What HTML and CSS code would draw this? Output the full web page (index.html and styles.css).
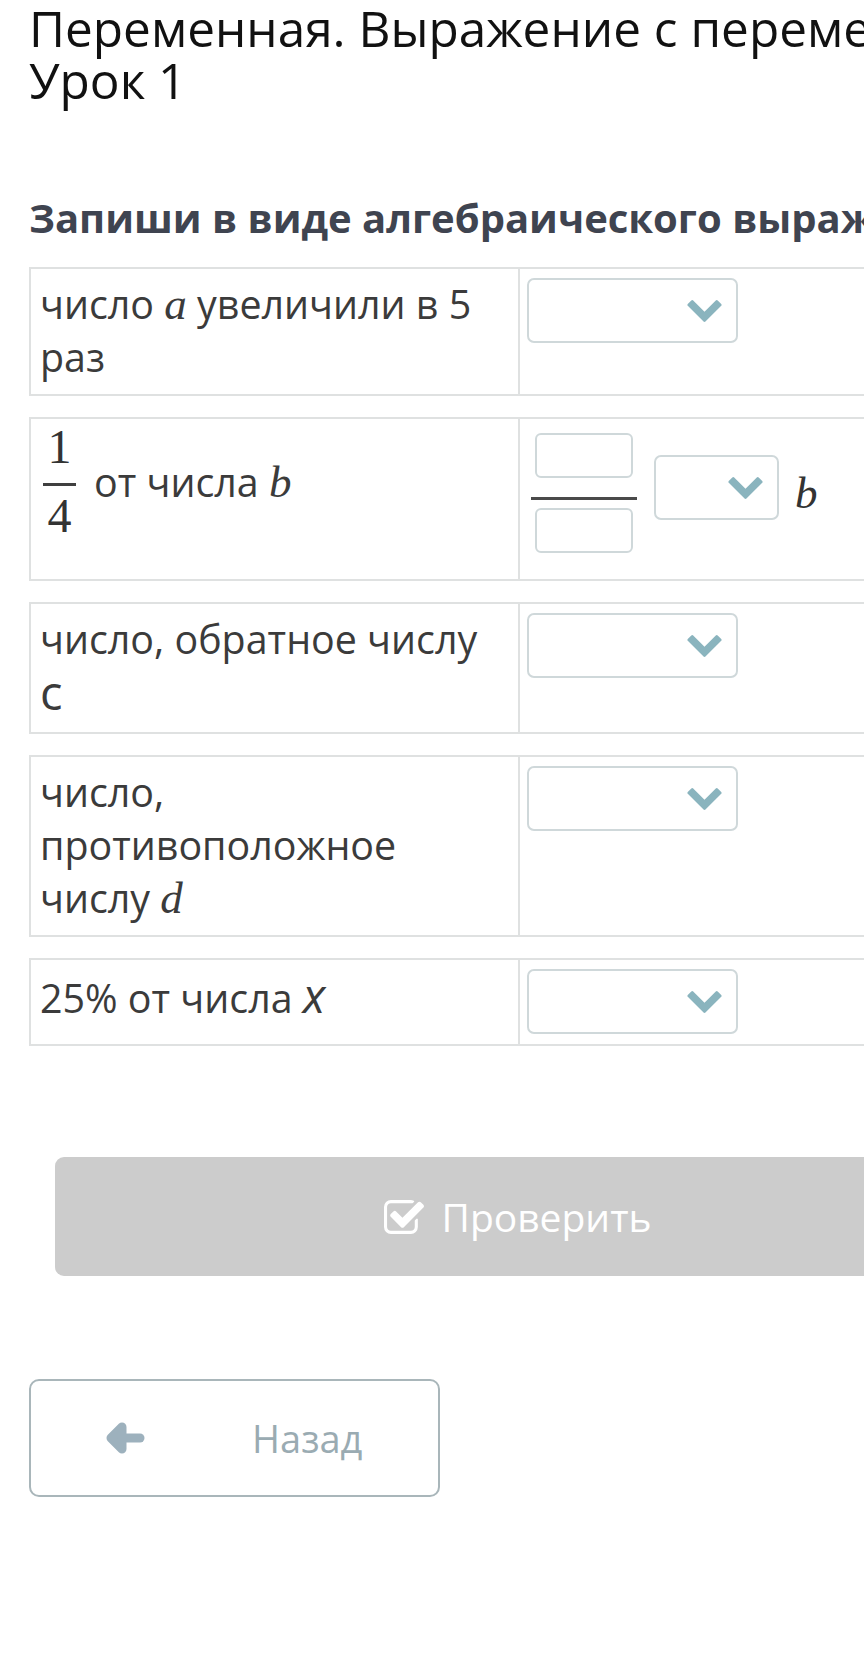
FILE: index.html
```html
<!DOCTYPE html>
<html lang="ru">
<head>
<meta charset="utf-8">
<title>Переменная. Выражение с переменной. Урок 1</title>
<link rel="stylesheet" href="styles.css">
</head>
<body>
<div class="page">
  <h1 class="title">Переменная. Выражение с переменной. Урок 1</h1>
  <h2 class="task-heading">Запиши в виде алгебраического выражения:</h2>

  <div class="rows">
    <div class="row">
      <div class="cell">число <span class="mi">a</span> увеличили в 5 раз</div>
      <div class="cell-answer">
        <div class="select"><svg class="chev" viewBox="90 533 1612 1035"><path d="M1683 808l-742 741q-19 19-45 19t-45-19l-742-741q-19-19-19-45.5t19-45.5l166-165q19-19 45-19t45 19l531 531 531-531q19-19 45-19t45 19l166 165q19 19 19 45.5t-19 45.5z"/></svg></div>
      </div>
    </div>

    <div class="row">
      <div class="cell cell-frac">
        <div class="frac">
          <span class="frac-num">1</span>
          <span class="frac-bar"></span>
          <span class="frac-den">4</span>
        </div>
        <span class="frac-text">от числа <span class="mi">b</span></span>
      </div>
      <div class="cell-answer cell-answer--expr">
        <div class="frac-input">
          <span class="input-box"></span>
          <span class="input-bar"></span>
          <span class="input-box"></span>
        </div>
        <div class="select select--small"><svg class="chev" viewBox="90 533 1612 1035"><path d="M1683 808l-742 741q-19 19-45 19t-45-19l-742-741q-19-19-19-45.5t19-45.5l166-165q19-19 45-19t45 19l531 531 531-531q19-19 45-19t45 19l166 165q19 19 19 45.5t-19 45.5z"/></svg></div>
        <span class="mi expr-var">b</span>
      </div>
    </div>

    <div class="row">
      <div class="cell">число, обратное числу <span class="mv">c</span></div>
      <div class="cell-answer">
        <div class="select"><svg class="chev" viewBox="90 533 1612 1035"><path d="M1683 808l-742 741q-19 19-45 19t-45-19l-742-741q-19-19-19-45.5t19-45.5l166-165q19-19 45-19t45 19l531 531 531-531q19-19 45-19t45 19l166 165q19 19 19 45.5t-19 45.5z"/></svg></div>
      </div>
    </div>

    <div class="row">
      <div class="cell">число, противоположное числу <span class="mi">d</span></div>
      <div class="cell-answer">
        <div class="select"><svg class="chev" viewBox="90 533 1612 1035"><path d="M1683 808l-742 741q-19 19-45 19t-45-19l-742-741q-19-19-19-45.5t19-45.5l166-165q19-19 45-19t45 19l531 531 531-531q19-19 45-19t45 19l166 165q19 19 19 45.5t-19 45.5z"/></svg></div>
      </div>
    </div>

    <div class="row">
      <div class="cell">25% от числа <span class="mv mv--x">x</span></div>
      <div class="cell-answer">
        <div class="select"><svg class="chev" viewBox="90 533 1612 1035"><path d="M1683 808l-742 741q-19 19-45 19t-45-19l-742-741q-19-19-19-45.5t19-45.5l166-165q19-19 45-19t45 19l531 531 531-531q19-19 45-19t45 19l166 165q19 19 19 45.5t-19 45.5z"/></svg></div>
      </div>
    </div>
  </div>

  <button class="check-btn" type="button">
    <svg class="check-icon" viewBox="64 128 1664 1408"><path d="M1472 930v318q0 119-84.5 203.5t-203.5 84.5h-832q-119 0-203.5-84.5t-84.5-203.5v-832q0-119 84.5-203.5t203.5-84.5h832q63 0 117 25 15 7 18 23 3 17-9 29l-49 49q-10 10-23 10-3 0-9-2-23-6-45-6h-832q-66 0-113 47t-47 113v832q0 66 47 113t113 47h832q66 0 113-47t47-113v-254q0-13 9-22l64-64q10-10 23-10 6 0 12 3 20 8 20 29zm231-489l-814 814q-24 24-57 24t-57-24l-430-430q-24-24-24-57t24-57l110-110q24-24 57-24t57 24l263 263 647-647q24-24 57-24t57 24l110 110q24 24 24 57t-24 57z"/></svg>
    <span>Проверить</span>
  </button>

  <button class="back-btn" type="button">
    <svg class="back-arrow" viewBox="0 0 40 30"><path d="M8 15H35" /><path d="M17 4L6 15L17 26Z" /></svg>
    <span class="back-label">Назад</span>
  </button>
</div>
</body>
</html>
```

FILE: styles.css
```css
* { box-sizing: border-box; }

html, body {
  margin: 0;
  overflow-x: hidden;
  background: #ffffff;
}

body {
  font-family: "Open Sans", "Noto Sans", sans-serif;
}

.page {
  width: 1036px;
  padding: 2px 29px 40px;
}

.title {
  margin: 0 -60px 0 0;
  font-size: 49.5px;
  line-height: 52px;
  font-weight: 400;
  color: #111111;
}

.task-heading {
  margin: 88px 0 25px;
  font-size: 40px;
  line-height: 48px;
  font-weight: 700;
  color: #3f4450;
  white-space: nowrap;
}

.rows {
  display: flex;
  flex-direction: column;
  gap: 21px;
}

.row {
  display: grid;
  grid-template-columns: 1fr 1fr;
  border: 2px solid #dfe1e1;
}

.cell {
  padding: 9px 24px 10px 9px;
  font-size: 39.4px;
  line-height: 53px;
  color: #3b3b3b;
}

.cell-answer {
  border-left: 2px solid #dfe1e1;
  padding: 9px 7px 10px;
}

.mi {
  font-family: "Liberation Serif", serif;
  font-style: italic;
  font-size: 45px;
}

.mv {
  font-size: 47px;
}

.mv--x {
  font-style: italic;
}

.select {
  width: 211px;
  height: 65px;
  border: 2px solid #cfd8da;
  border-radius: 7px;
  background: #ffffff;
  display: flex;
  align-items: center;
  justify-content: flex-end;
  padding-right: 14px;
}

.chev {
  width: 35px;
  height: 22px;
  fill: #8ab4be;
}

/* fraction in question cell */
.cell-frac {
  display: flex;
  align-items: flex-start;
}

.frac {
  display: flex;
  flex-direction: column;
  align-items: center;
  width: 33px;
  margin-left: 3px;
  font-family: "Liberation Serif", serif;
  font-size: 48px;
  line-height: 38px;
  color: #333333;
}

.frac-bar {
  width: 33px;
  height: 3px;
  background: #3f3f3f;
  margin: 17px 0 11px;
}

.frac-text {
  margin: 28px 0 0 18px;
}

/* fraction answer */
.cell-answer--expr {
  display: flex;
  align-items: flex-start;
  padding-bottom: 26px;
}

.frac-input {
  display: flex;
  flex-direction: column;
  align-items: center;
  width: 106px;
  margin: 5px 0 0 4px;
}

.input-box {
  width: 98px;
  height: 45px;
  border: 2px solid #cfd8da;
  border-radius: 6px;
}

.input-bar {
  width: 106px;
  height: 3px;
  background: #4a4a4a;
  margin: 19px 0 8px;
}

.select--small {
  width: 125px;
  margin: 27px 0 0 17px;
}

.expr-var {
  margin: 43px 0 0 16px;
  line-height: 44px;
  color: #333333;
}

/* buttons */
.check-btn {
  margin: 111px 0 0 26px;
  width: 926px;
  height: 119px;
  border: 0;
  border-radius: 9px;
  background: #cccccc;
  color: #ffffff;
  font-family: inherit;
  font-size: 39px;
  display: flex;
  align-items: center;
  justify-content: center;
  gap: 17px;
  padding: 0;
}

.check-icon {
  width: 40px;
  height: 34px;
  fill: #ffffff;
}

.back-btn {
  margin-top: 103px;
  width: 411px;
  height: 118px;
  border: 2px solid #a9b6ba;
  border-radius: 10px;
  background: #ffffff;
  display: flex;
  align-items: center;
  padding: 0 0 0 74px;
  font-family: inherit;
  font-size: 38px;
  color: #9aabb2;
}

.back-arrow {
  width: 40px;
  height: 32px;
  fill: #9db1bd;
  stroke: #9db1bd;
  stroke-width: 9;
  stroke-linecap: round;
  stroke-linejoin: round;
}

.back-label {
  margin-left: 107px;
}
```
